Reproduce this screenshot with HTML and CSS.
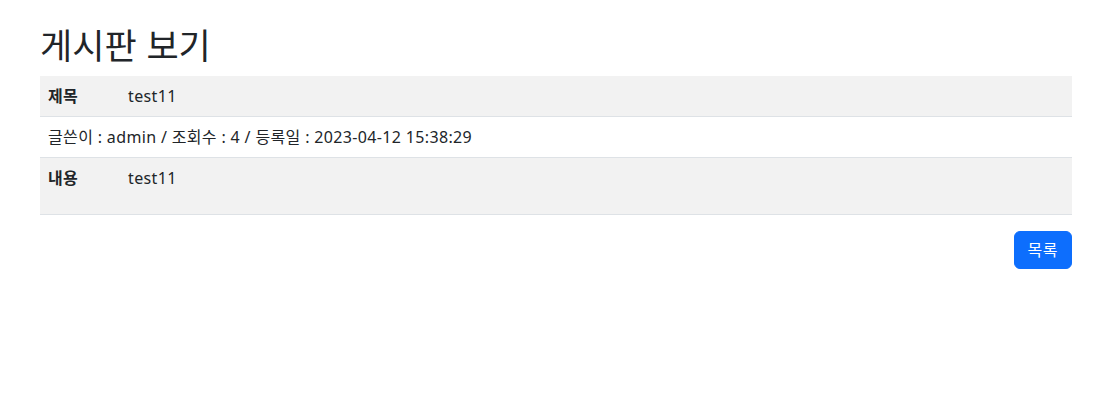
FILE: index.html
```html
<!DOCTYPE html>
<html lang="ko">
<head>
    <meta charset="UTF-8">
    <meta name="viewport" content="width=device-width, initial-scale=1.0">
    <title>게시판 보기</title>
    <link rel="stylesheet" href="styles.css">
</head>
<body>
    <div class="container">
        <h2 class="page-title">게시판 보기</h2>
        <table class="board-table">
            <tr class="striped">
                <th>제목</th>
                <td>test11</td>
            </tr>
            <tr>
                <td colspan="2">글쓴이 : admin / 조회수 : 4 / 등록일 : 2023-04-12 15:38:29</td>
            </tr>
            <tr class="striped content-row">
                <th>내용</th>
                <td>test11</td>
            </tr>
        </table>
        <div class="actions">
            <button type="button" class="btn-list">목록</button>
        </div>
    </div>
</body>
</html>
```

FILE: styles.css
```css
body {
    margin: 0;
    font-family: "Noto Sans", "Noto Sans CJK KR", sans-serif;
    font-size: 16px;
    line-height: 1.5;
    color: #212529;
    background-color: #fff;
}

.container {
    padding: 23px 22px 0 40px;
}

.page-title {
    margin: 0 0 11px;
    font-family: "Noto Sans CJK KR", sans-serif;
    font-size: 35px;
    font-weight: 400;
    line-height: 1.2;
}

.board-table {
    width: 100%;
    border-collapse: collapse;
    letter-spacing: 0.35px;
}

.board-table th,
.board-table td {
    padding: 8px;
    text-align: left;
    vertical-align: top;
    border-bottom: 1px solid #dee2e6;
}

.board-table th {
    width: 64px;
    font-weight: 700;
}

.striped {
    background-color: #f2f2f2;
}

.content-row th,
.content-row td {
    height: 40px;
}

.actions {
    display: flex;
    justify-content: flex-end;
    margin-top: 16px;
}

.btn-list {
    padding: 6px 13px;
    font-family: inherit;
    font-size: 16px;
    line-height: 1.5;
    letter-spacing: 0.5px;
    color: #fff;
    background-color: #0d6efd;
    border: 1px solid #0d6efd;
    border-radius: 6px;
}

.btn-list:hover {
    background-color: #0b5ed7;
}
```
